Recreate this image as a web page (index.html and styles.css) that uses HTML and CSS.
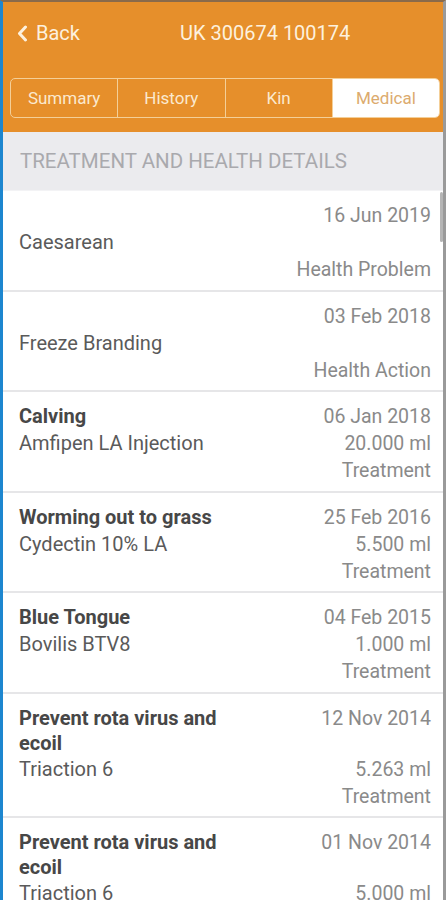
FILE: index.html
```html
<!DOCTYPE html>
<html lang="en">
<head>
    <meta charset="UTF-8">
    <meta name="viewport" content="width=device-width, initial-scale=1.0">
    <title>UK 300674 100174</title>
    <link rel="stylesheet" href="styles.css">
</head>
<body>
    <div class="screen">
        <header class="topbar">
            <div class="nav">
                <a class="back" href="#">
                    <svg width="11" height="17" viewBox="0 0 11 17"><path d="M8.5 2 L2.5 8.5 L8.5 15" fill="none" stroke="currentColor" stroke-width="3" stroke-linecap="round" stroke-linejoin="round"/></svg>
                    <span>Back</span>
                </a>
                <div class="title">UK 300674 100174</div>
            </div>
            <div class="tabs">
                <div class="tab">Summary</div>
                <div class="tab">History</div>
                <div class="tab">Kin</div>
                <div class="tab active">Medical</div>
            </div>
        </header>

        <div class="section-head">TREATMENT AND HEALTH DETAILS</div>

        <div class="list">
            <div class="item">
                <div class="name"></div>
                <div class="date">16 Jun 2019</div>
                <div class="product">Caesarean</div>
                <div class="amount"></div>
                <div class="kind">Health Problem</div>
            </div>
            <div class="item">
                <div class="name"></div>
                <div class="date">03 Feb 2018</div>
                <div class="product">Freeze Branding</div>
                <div class="amount"></div>
                <div class="kind">Health Action</div>
            </div>
            <div class="item">
                <div class="name">Calving</div>
                <div class="date">06 Jan 2018</div>
                <div class="product">Amfipen LA Injection</div>
                <div class="amount">20.000 ml</div>
                <div class="kind">Treatment</div>
            </div>
            <div class="item">
                <div class="name">Worming out to grass</div>
                <div class="date">25 Feb 2016</div>
                <div class="product">Cydectin 10% LA</div>
                <div class="amount">5.500 ml</div>
                <div class="kind">Treatment</div>
            </div>
            <div class="item">
                <div class="name">Blue Tongue</div>
                <div class="date">04 Feb 2015</div>
                <div class="product">Bovilis BTV8</div>
                <div class="amount">1.000 ml</div>
                <div class="kind">Treatment</div>
            </div>
            <div class="item">
                <div class="name">Prevent rota virus and ecoil</div>
                <div class="date">12 Nov 2014</div>
                <div class="product">Triaction 6</div>
                <div class="amount">5.263 ml</div>
                <div class="kind">Treatment</div>
            </div>
            <div class="item">
                <div class="name">Prevent rota virus and ecoil</div>
                <div class="date">01 Nov 2014</div>
                <div class="product">Triaction 6</div>
                <div class="amount">5.000 ml</div>
                <div class="kind">Treatment</div>
            </div>
        </div>
        <div class="scrollbar"></div>
    </div>
</body>
</html>
```

FILE: styles.css
```css
body {
    margin: 0;
    font-family: Roboto, "Noto Sans", Arial, sans-serif;
    background-color: #fff;
}
.screen {
    position: relative;
    height: 900px;
    overflow: hidden;
    border-top: 2px solid #8a6a4a;
    border-left: 3px solid #1d86cf;
    border-right: 3px solid #9a9a9a;
    box-sizing: border-box;
    background-color: #fff;
}
.topbar {
    background-color: #e68f2b;
    padding: 0 0 14px 0;
}
.nav {
    display: flex;
    align-items: center;
    height: 62px;
}
.back {
    display: flex;
    align-items: center;
    gap: 8px;
    color: #fdf1de;
    text-decoration: none;
    font-size: 20px;
    padding-left: 14px;
    width: 163px;
}
.title {
    color: #fdf1de;
    font-size: 20px;
}
.tabs {
    display: flex;
    margin: 14px 3px 0 7px;
    height: 38px;
    border: 1px solid #f4cf98;
    border-radius: 5px;
    overflow: hidden;
}
.tab {
    flex: 1;
    display: flex;
    align-items: center;
    justify-content: center;
    color: #fbe9cf;
    font-size: 17px;
    border-left: 1px solid #f4cf98;
}
.tab:first-child {
    border-left: none;
}
.tab.active {
    background-color: #fff;
    color: #dcab6e;
}
.section-head {
    background-color: #ebebee;
    color: #a9a9ad;
    font-size: 20.5px;
    height: 58px;
    line-height: 58px;
    padding-left: 17px;
    border-bottom: 1px solid #f3f3f5;
}
.item {
    display: grid;
    grid-template-columns: 1fr auto;
    column-gap: 16px;
    padding: 11px 12px 6.5px 16px;
    border-bottom: 2px solid #e6e6e8;
    font-size: 19.5px;
    line-height: 27px;
}
.name {
    font-weight: bold;
    color: #474747;
    font-size: 20px;
    line-height: 25px;
    max-width: 226px;
    padding-top: 1px;
}
.product {
    color: #5a5a5a;
    font-size: 20px;
}
.date, .amount, .kind {
    text-align: right;
    color: #8a8a8a;
}
.kind {
    grid-column: 2;
}
.scrollbar {
    position: absolute;
    right: 0;
    top: 190px;
    width: 3px;
    height: 50px;
    background-color: #b5b5b5;
    border-radius: 2px;
}
```
